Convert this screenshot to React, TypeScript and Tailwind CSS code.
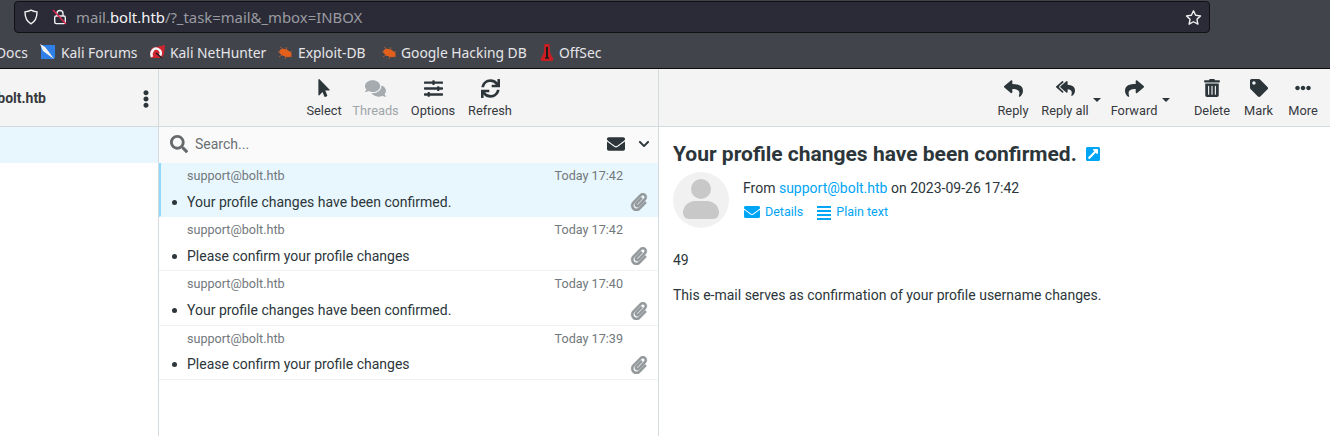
import {
  FaChevronDown,
  FaComments,
  FaEllipsisH,
  FaEllipsisV,
  FaEnvelope,
  FaExternalLinkSquareAlt,
  FaMousePointer,
  FaPaperclip,
  FaReply,
  FaReplyAll,
  FaSearch,
  FaShare,
  FaSlidersH,
  FaSync,
  FaTag,
  FaTrashAlt,
} from "react-icons/fa";
import type { ReactNode } from "react";

const MESSAGES = [
  { subject: "Your profile changes have been confirmed.", time: "Today 17:42", selected: true },
  { subject: "Please confirm your profile changes", time: "Today 17:42", selected: false },
  { subject: "Your profile changes have been confirmed.", time: "Today 17:40", selected: false },
  { subject: "Please confirm your profile changes", time: "Today 17:39", selected: false },
];

function Bug() {
  return (
    <svg width="17" height="14" viewBox="0 0 17 14" className="shrink-0">
      <path d="M3 1l4 3M1 6l4 1M2 11l4-3M9 1l1 3M15 5l-3 2M15 11l-4-2M8 13l1-3" stroke="#b8613a" strokeWidth="0.8" />
      <ellipse cx="8.500" cy="7" rx="6.500" ry="3.600" transform="rotate(22 8.500 7)" fill="#e2601c" />
    </svg>
  );
}

function Bookmark({ icon, label, className }: { icon?: ReactNode; label: string; className?: string }) {
  return (
    <div className={`flex items-center shrink-0 ${className ?? ""}`}>
      {icon}
      <span>{label}</span>
    </div>
  );
}

function ToolButton({
  icon,
  label,
  className,
  muted,
}: {
  icon: ReactNode;
  label: string;
  className: string;
  muted?: boolean;
}) {
  return (
    <div className={`flex flex-col items-center shrink-0 ${className} ${muted ? "text-[#a5abaf]" : "text-[#2c363a]"}`}>
      <div className="h-[20px] flex items-center justify-center text-[19px]">{icon}</div>
      <span className={`text-[12.800px] leading-[15px] mt-[5px] whitespace-nowrap ${muted ? "text-[#a0a6aa]" : "text-[#37393e]"}`}>{label}</span>
    </div>
  );
}

function Caret() {
  return <div className="w-0 h-0 border-x-[4px] border-x-transparent border-t-[4px] border-t-[#2c363a]" />;
}

export default function App() {
  return (
    <div className="w-[1330px] h-[436px] overflow-hidden flex flex-col bg-white font-['Roboto',sans-serif]">
      {/* Browser chrome */}
      <div className="h-[69px] shrink-0 bg-[#42444c] border-b border-[#0c0c0d] font-['Noto_Sans',sans-serif]">
        <div className="h-[34px] pl-[14px] pr-[120px] pt-px">
          <div className="h-[32px] w-[1196px] bg-[#2a2b36] border border-[#111114] rounded-[4px] flex items-center pl-[8px] pr-[7px]">
            <svg width="16" height="16" viewBox="0 0 16 16" fill="none" stroke="#f0f0f2" strokeWidth="1.4">
              <path d="M8 1.2c2 1.2 4 1.6 6 1.7 0 5-1.4 9.300-6 11.900C3.400 12.200 2 7.900 2 2.900c2-.1 4-.5 6-1.700z" />
            </svg>
            <svg width="16" height="18" viewBox="0 0 16 18" fill="none" className="ml-[13px]">
              <path d="M5 8V5.500a3 3 0 0 1 6 0V8" stroke="#f0f0f2" strokeWidth="1.400" />
              <rect x="2.700" y="8" width="10.600" height="7.600" rx="1.500" stroke="#f0f0f2" strokeWidth="1.400" />
              <path d="M1 2l13 14" stroke="#e22850" strokeWidth="1.500" />
            </svg>
            <div className="ml-[8px] pt-[1px] text-[14.860px] text-[#9a9ba1] leading-none">
              mail.<span className="text-[#f4f4f6]">bolt.htb</span>/?_task=mail&amp;_mbox=INBOX
            </div>
            <svg width="17" height="17" viewBox="0 0 24 24" fill="none" stroke="#f0f0f2" strokeWidth="2" strokeLinejoin="round" className="ml-auto">
              <path d="M12 2.500l3 6.300 6.900.9-5 4.800 1.300 6.900-6.200-3.400-6.200 3.400 1.300-6.900-5-4.800 6.900-.9z" />
            </svg>
          </div>
        </div>
        <div className="h-[34px] pt-[4px] flex items-center text-[13.850px] text-[#e6e6e9] -ml-[4px]">
          <Bookmark label="Docs" className="w-[43px]" />
          <Bookmark
            className="w-[110px] gap-[5px]"
            label="Kali Forums"
            icon={
              <svg width="17" height="17" viewBox="0 0 17 17" className="shrink-0 -mt-[2px]">
                <path d="M3 2h13v12a2 2 0 0 1-2 2H2V3a1 1 0 0 1 1-1z" fill="#2f7fe8" />
                <path d="M1 1l5 3 4 5 5 7-7-5-4-3z" fill="#f2f2f2" />
              </svg>
            }
          />
          <Bookmark
            className="w-[128px] gap-[5px]"
            label="Kali NetHunter"
            icon={
              <svg width="16" height="16" viewBox="0 0 16 16" className="shrink-0 -mt-[2px]">
                <path d="M3 4l13-3-1 9-2 4H2L1 8z" fill="#d0252f" />
                <path d="M3 13C1 8 5 3 9 5s3 5 2 7" fill="none" stroke="#f4f4f4" strokeWidth="2.500" />
                <path d="M7 9l6 5" stroke="#1d1d20" strokeWidth="1.500" />
              </svg>
            }
          />
          <Bookmark className="w-[104px] gap-[4px]" label="Exploit-DB" icon={<Bug />} />
          <Bookmark className="w-[159px] gap-[3px]" label="Google Hacking DB" icon={<Bug />} />
          <Bookmark
            className="gap-[5px]"
            label="OffSec"
            icon={
              <svg width="14" height="17" viewBox="0 0 14 17" className="shrink-0 -mt-[1px]">
                <path d="M4.500 0h5l.7 9 3.300 6-1 2H1.500l-1-2 3.300-6z" fill="#c81e22" />
                <path d="M7 3v11" stroke="#1b1b1b" strokeWidth="2" />
                <path d="M5 14h4" stroke="#1b1b1b" strokeWidth="1.500" />
              </svg>
            }
          />
        </div>
      </div>

      <div className="flex-1 flex min-h-0 text-[#2c363a]">
        {/* Folder column */}
        <div className="w-[159px] shrink-0 border-r border-[#d4dbde] flex flex-col">
          <div className="h-[58px] shrink-0 bg-[#f4f4f4] border-b border-[#d4dbde] flex items-center justify-end relative overflow-hidden pt-[2px]">
            <span className="absolute right-[112px] text-[14px] font-bold text-[#37393e] whitespace-nowrap">mail.bolt.htb</span>
            <FaEllipsisV className="text-[18px] mr-[3px] text-[#2c363a]" />
          </div>
          <div className="h-[36px] bg-[#e8f6fd]" />
        </div>

        {/* Message list column */}
        <div className="w-[500px] shrink-0 border-r border-[#d4dbde] flex flex-col">
          <div className="h-[58px] shrink-0 bg-[#f4f4f4] border-b border-[#d4dbde] flex items-start pt-[9px] pl-[146px]">
            <ToolButton className="w-[38px]" label="Select" icon={<FaMousePointer className="text-[18px]" />} />
            <ToolButton className="w-[47px] ml-[9px]" muted label="Threads" icon={<FaComments className="text-[21px]" />} />
            <ToolButton className="w-[46px] ml-[11px]" label="Options" icon={<FaSlidersH />} />
            <ToolButton className="w-[44px] ml-[12px]" label="Refresh" icon={<FaSync />} />
          </div>
          <div className="h-[35.700px] shrink-0 bg-[#fafafa] flex items-center pl-[11px] pr-[8px] pb-[1px]">
            <FaSearch className="text-[18px] text-[#666a6d]" />
            <span className="ml-[7px] text-[14px] text-[#6a6f73]">Search...</span>
            <FaEnvelope className="ml-auto text-[18px] text-[#2c363a]" />
            <FaChevronDown className="ml-[13px] text-[12px] text-[#2c363a]" />
          </div>
          <div className="flex flex-col">
            {MESSAGES.map((m, i) => (
              <div
                key={i}
                className={`h-[54.300px] box-border pr-[10px] border-b ${
                  m.selected
                    ? "bg-[#e8f6fd] border-l-[2px] border-l-[#8fd8ff] border-b-transparent pl-[26px]"
                    : "border-b-[#f0f2f3] pl-[28px]"
                }`}
              >
                <div className="flex justify-between pr-[25px] pt-[4px] text-[12.600px] leading-[18px] text-[#72787c]">
                  <span>support@bolt.htb</span>
                  <span>{m.time}</span>
                </div>
                <div className="flex items-center mt-[7.350px] h-[20px] relative">
                  <span className="absolute -left-[15px] w-[5px] h-[5px] rounded-full bg-[#2c363a]" />
                  <span className="text-[14px] text-[#2c363a]">{m.subject}</span>
                  <FaPaperclip className="ml-auto text-[18px] text-[#93989b] stroke-[12px]" />
                </div>
              </div>
            ))}
          </div>
        </div>

        {/* Preview column */}
        <div className="flex-1 flex flex-col min-w-0">
          <div className="h-[58px] shrink-0 bg-[#f4f4f4] border-b border-[#d4dbde] flex items-start pt-[9px] pl-[337px]">
            <ToolButton className="w-[34px]" label="Reply" icon={<FaReply />} />
            <ToolButton className="w-[46px] ml-[12px]" label="Reply all" icon={<FaReplyAll />} />
            <div className="mt-[20px] ml-[5px]"><Caret /></div>
            <ToolButton className="w-[46px] ml-[10px]" label="Forward" icon={<FaShare />} />
            <div className="mt-[20px] ml-[5px]"><Caret /></div>
            <ToolButton className="w-[36px] ml-[24px]" label="Delete" icon={<FaTrashAlt className="text-[18px]" />} />
            <ToolButton className="w-[29px] ml-[14px]" label="Mark" icon={<FaTag className="text-[18px]" />} />
            <ToolButton className="w-[30px] ml-[15px]" label="More" icon={<FaEllipsisH className="text-[16px]" />} />
          </div>
          <div className="pl-[14px] pt-[14px]">
            <div className="flex items-center gap-[8px]">
              <h1 className="text-[21px] leading-[26px] font-bold text-[#2c363a]">Your profile changes have been confirmed.</h1>
              <FaExternalLinkSquareAlt className="text-[16px] text-[#00a5f5]" />
            </div>
            <div className="flex mt-[5px]">
              <div className="w-[56px] h-[56px] rounded-full bg-[#f1f1f1] shrink-0 flex flex-col items-center pt-[7px]">
                <div className="w-[20px] h-[20px] rounded-full bg-[#c8c8c8]" />
                <div className="w-[36px] h-[18px] mt-[2px] rounded-t-[12px] rounded-b-[6px] bg-[#c8c8c8]" />
              </div>
              <div className="ml-[14px] pt-[6px]">
                <div className="text-[14px] leading-[20px] text-[#2c363a]">
                  From <span className="text-[#00a5f5]">support@bolt.htb</span> on 2023-09-26 17:42
                </div>
                <div className="flex items-center text-[12.500px] leading-[20px] text-[#00a5f5] mt-[4px] pl-[1px]">
                  <FaEnvelope className="text-[16px]" />
                  <span className="ml-[5px]">Details</span>
                  <svg width="14" height="15" viewBox="0 0 15 15" className="ml-[14px]" fill="#00a5f5" preserveAspectRatio="none">
                    <rect x="0" y="1" width="15" height="2" />
                    <rect x="0" y="5" width="15" height="2" />
                    <rect x="0" y="9" width="15" height="2" />
                    <rect x="0" y="13" width="15" height="2" />
                  </svg>
                  <span className="ml-[5px]">Plain text</span>
                </div>
              </div>
            </div>
            <p className="text-[14px] leading-[20px] mt-[22px] text-[#2c363a]">49</p>
            <p className="text-[14px] leading-[20px] mt-[15px] text-[#2c363a]">This e-mail serves as confirmation of your profile username changes.</p>
          </div>
        </div>
      </div>
    </div>
  );
}
